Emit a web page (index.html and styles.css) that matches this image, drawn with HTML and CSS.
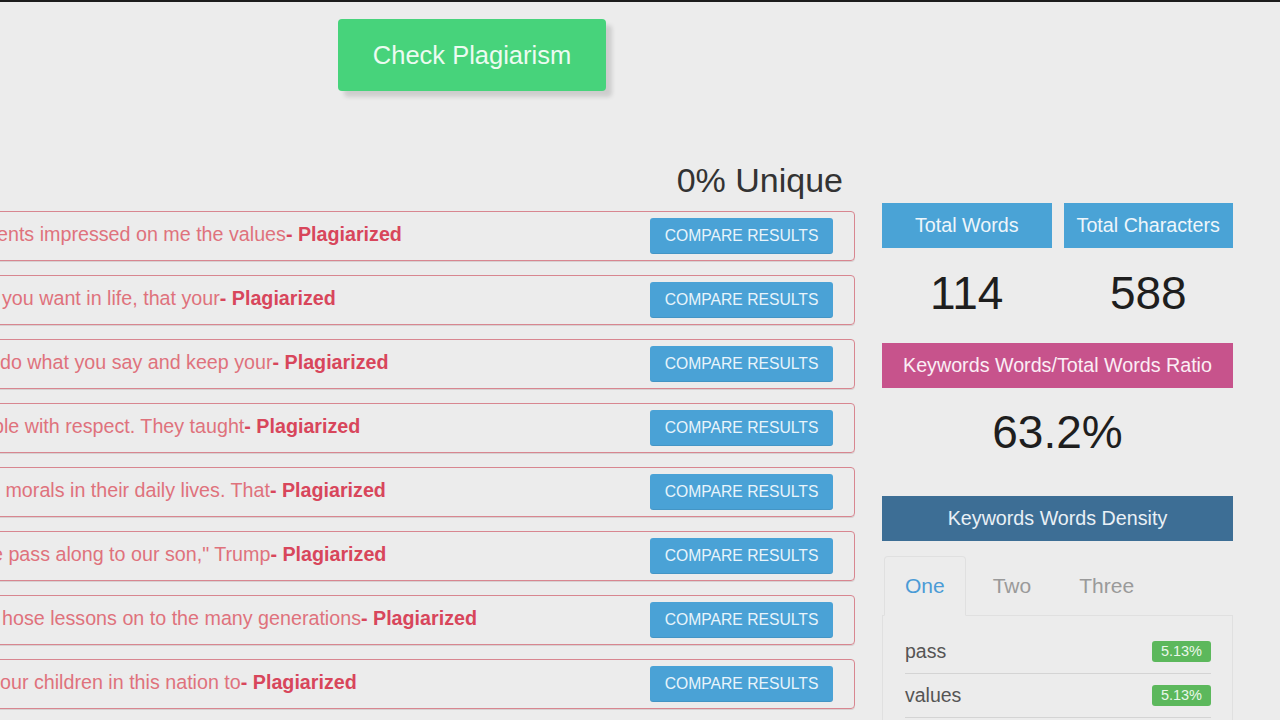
FILE: index.html
```
<!DOCTYPE html>
<html lang="en">
<head>
<meta charset="utf-8">
<title>Plagiarism Checker</title>
<link rel="stylesheet" href="styles.css">
</head>
<body>
<div class="topbar"></div>
<div class="page">
  <main class="results">
    <div class="check-wrap"><button class="check-btn" type="button">Check Plagiarism</button></div>
    <h2 class="unique">0% Unique</h2>
    <ul class="rows">
      <li class="row"><p class="row-text cut-s">ents impressed on me the values<b>- Plagiarized</b></p><button class="compare" type="button">Compare Results</button></li>
      <li class="row"><p class="row-text shift">you want in life, that your<b>- Plagiarized</b></p><button class="compare" type="button">Compare Results</button></li>
      <li class="row"><p class="row-text">do what you say and keep your<b>- Plagiarized</b></p><button class="compare" type="button">Compare Results</button></li>
      <li class="row"><p class="row-text cut-m">ple with respect. They taught<b>- Plagiarized</b></p><button class="compare" type="button">Compare Results</button></li>
      <li class="row"><p class="row-text">&nbsp;morals in their daily lives. That<b>- Plagiarized</b></p><button class="compare" type="button">Compare Results</button></li>
      <li class="row"><p class="row-text cut-l">e pass along to our son," Trump<b>- Plagiarized</b></p><button class="compare" type="button">Compare Results</button></li>
      <li class="row"><p class="row-text shift">hose lessons on to the many generations<b>- Plagiarized</b></p><button class="compare" type="button">Compare Results</button></li>
      <li class="row"><p class="row-text">our children in this nation to<b>- Plagiarized</b></p><button class="compare" type="button">Compare Results</button></li>
    </ul>
  </main>
  <aside class="stats">
    <div class="stat-grid">
      <div class="stat">
        <div class="label blue">Total Words</div>
        <div class="stat-value">114</div>
      </div>
      <div class="stat">
        <div class="label blue">Total Characters</div>
        <div class="stat-value">588</div>
      </div>
    </div>
    <div class="label pink">Keywords Words/Total Words Ratio</div>
    <div class="ratio-value">63.2%</div>
    <div class="label navy">Keywords Words Density</div>
    <ul class="tabs">
      <li class="tab active">One</li>
      <li class="tab">Two</li>
      <li class="tab">Three</li>
    </ul>
    <div class="tab-panel">
      <ul class="kw">
        <li class="kw-item"><span>pass</span><span class="badge">5.13%</span></li>
        <li class="kw-item"><span>values</span><span class="badge">5.13%</span></li>
        <li class="kw-item"><span>lessons</span><span class="badge">2.56%</span></li>
        <li class="kw-item"><span>respect</span><span class="badge">2.56%</span></li>
      </ul>
    </div>
  </aside>
</div>
</body>
</html>
```
FILE: styles.css
```
html, body {
  margin: 0;
  padding: 0;
  height: 720px;
  overflow: hidden;
}
body {
  background: #ececec;
  font-family: "Liberation Sans", Arial, sans-serif;
  color: #333;
}
.topbar {
  height: 2px;
  background: #1c1c1c;
}
.page {
  display: flex;
  align-items: flex-start;
}
.results {
  margin-left: -20px;
  width: 875px;
  flex: none;
}
.check-wrap {
  padding: 17px 0 0 358px;
}
.check-btn {
  display: block;
  width: 268px;
  height: 72px;
  border: none;
  border-radius: 4px;
  background: #47d37b;
  color: #ecfbf1;
  font-family: inherit;
  font-size: 25.5px;
  box-shadow: 6px 6px 4px rgba(0, 0, 0, 0.13);
  padding: 0;
}
.unique {
  margin: 69px 0 0;
  padding-right: 12px;
  text-align: right;
  font-weight: normal;
  font-size: 34px;
  line-height: 40px;
  color: #333;
}
.rows {
  list-style: none;
  margin: 11px 0 0;
  padding: 0;
}
.row {
  display: flex;
  align-items: center;
  justify-content: space-between;
  box-sizing: border-box;
  height: 50px;
  margin-bottom: 14px;
  padding: 0 21px 0 19px;
  border: 1px solid #d88690;
  border-radius: 4px;
  box-shadow: 0 1px 0 rgba(120, 90, 90, 0.18);
  overflow: hidden;
}
.row-text {
  margin: 0 0 3px;
  font-size: 19.7px;
  white-space: nowrap;
  color: #df727c;
}
.row-text b {
  color: #d8465b;
}
.cut-s { text-indent: -3px; }
.cut-m { text-indent: -7px; }
.cut-l { text-indent: -8px; }
.shift { text-indent: 2px; }
.compare {
  flex: none;
  width: 183px;
  height: 36px;
  border: none;
  border-radius: 3px;
  background: #4aa2d6;
  color: #e8f4fb;
  font-family: inherit;
  font-size: 15.7px;
  text-transform: uppercase;
  padding: 0;
  box-shadow: inset 0 -1px 0 rgba(0, 0, 0, 0.08);
}
.stats {
  flex: none;
  width: 351px;
  margin-left: 27px;
  padding-top: 201px;
}
.stat-grid {
  display: grid;
  grid-template-columns: 1fr 1fr;
  column-gap: 12px;
}
.label {
  height: 45px;
  display: flex;
  align-items: center;
  justify-content: center;
  font-size: 19.7px;
  color: #eef6fb;
  white-space: nowrap;
}
.blue { background: #4aa3d6; }
.pink { background: #c7538c; color: #fbeef5; }
.navy { background: #3d6e95; color: #e9f0f6; }
.stat-value {
  height: 95px;
  box-sizing: border-box;
  padding-bottom: 6px;
  display: flex;
  align-items: center;
  justify-content: center;
  font-size: 46px;
  color: #1e1e1e;
}
.ratio-value {
  height: 92px;
  box-sizing: border-box;
  padding-bottom: 4px;
  margin-bottom: 16px;
  display: flex;
  align-items: center;
  justify-content: center;
  font-size: 46px;
  color: #1e1e1e;
}
.tabs {
  list-style: none;
  display: flex;
  margin: 15px 0 0;
  padding: 0 0 0 2px;
  border-bottom: 1px solid #e0e0e0;
}
.tab {
  height: 60px;
  box-sizing: border-box;
  line-height: 58px;
  padding: 0 20px;
  margin-right: 6px;
  margin-bottom: -1px;
  border: 1px solid transparent;
  border-radius: 4px 4px 0 0;
  font-size: 21px;
  color: #9a9a9a;
}
.tab.active {
  color: #4b9bd6;
  border-color: #e0e0e0;
  border-bottom-color: #ececec;
}
.tab-panel {
  border: 1px solid #e0e0e0;
  border-top: none;
  padding: 14px 21px 0 22px;
  height: 200px;
}
.kw {
  list-style: none;
  margin: 0;
  padding: 0;
}
.kw-item {
  display: flex;
  align-items: center;
  justify-content: space-between;
  height: 43px;
  border-bottom: 1px solid #d4d4d4;
  font-size: 19.5px;
  color: #555;
}
.badge {
  height: 21px;
  line-height: 21px;
  padding: 0 9px;
  border-radius: 3px;
  background: #5cb85c;
  color: #eaf7ea;
  font-size: 14.5px;
}
```
